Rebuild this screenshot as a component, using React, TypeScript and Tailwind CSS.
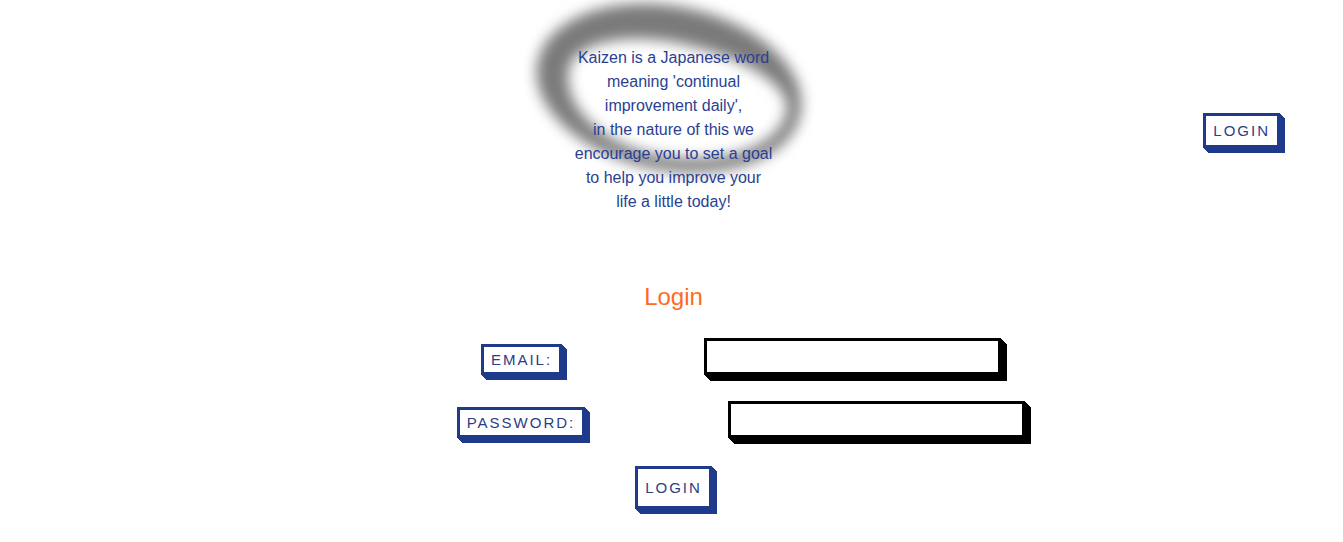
import React from 'react';

const navyShadow =
  'shadow-[1px_1px_0_#1f3a8a,2px_2px_0_#1f3a8a,3px_3px_0_#1f3a8a,4px_4px_0_#1f3a8a,5px_5px_0_#1f3a8a]';

const BoxButton: React.FC<{ label: string; className?: string }> = ({ label, className = '' }) => (
  <button
    className={`border-[3px] border-[#1f3a8a] bg-white text-[15px] leading-[17px] tracking-[2px] uppercase text-[#2c3d85] ${navyShadow} ${className}`}
  >
    {label}
  </button>
);

const Field: React.FC<{ type: string }> = ({ type }) => (
  <input
    type={type}
    className="w-[297px] h-[37px] border-[3px] border-black bg-white outline-none shadow-[1px_1px_0_#000,2px_2px_0_#000,3px_3px_0_#000,4px_4px_0_#000,5px_5px_0_#000,6px_6px_0_#000]"
  />
);

const App: React.FC = () => {
  return (
    <div className="min-h-screen bg-white pl-[4px] font-['Liberation_Sans',Arial,sans-serif]">
      <header className="grid grid-cols-[1fr_auto_1fr] items-center pt-[46px]">
        <div />
        <div className="relative">
          {/* blurred ring behind the quote */}
          <div className="absolute left-1/2 top-1/2 ml-[-138px] mt-[-124px] w-[268px] h-[164px] rounded-[50%] rotate-[11deg] border-t-[36px] border-l-[32px] border-r-[14px] border-b-[14px] border-[#7a7a7a] blur-[7px]" />
          <p className="relative text-center text-[16px] leading-6 text-[#2b3f92]">
            Kaizen is a Japanese word
            <br />
            meaning 'continual
            <br />
            improvement daily',
            <br />
            in the nature of this we
            <br />
            encourage you to set a goal
            <br />
            to help you improve your
            <br />
            life a little today!
          </p>
        </div>
        <div className="justify-self-end mr-[63px]">
          <BoxButton label="Login" className="px-[7px] py-[6px]" />
        </div>
      </header>

      <main className="flex flex-col items-center">
        <h2 className="mt-[69px] text-[24px] leading-7 text-[#ff6a22]">Login</h2>

        <div className="mt-[27px] pl-[135px] flex items-center gap-[142px]">
          <BoxButton label="Email:" className="px-[7px] py-[4px] leading-[16px] mt-[5px]" />
          <Field type="email" />
        </div>

        <div className="mt-[26px] pl-[135px] flex items-center gap-[143px]">
          <BoxButton label="Password:" className="px-[7px] py-[4px] leading-[16px] mt-[5px]" />
          <Field type="password" />
        </div>

        <div className="mt-[28px]">
          <BoxButton label="Login" className="px-[7px] py-[10px]" />
        </div>
      </main>
    </div>
  );
};

export default App;
